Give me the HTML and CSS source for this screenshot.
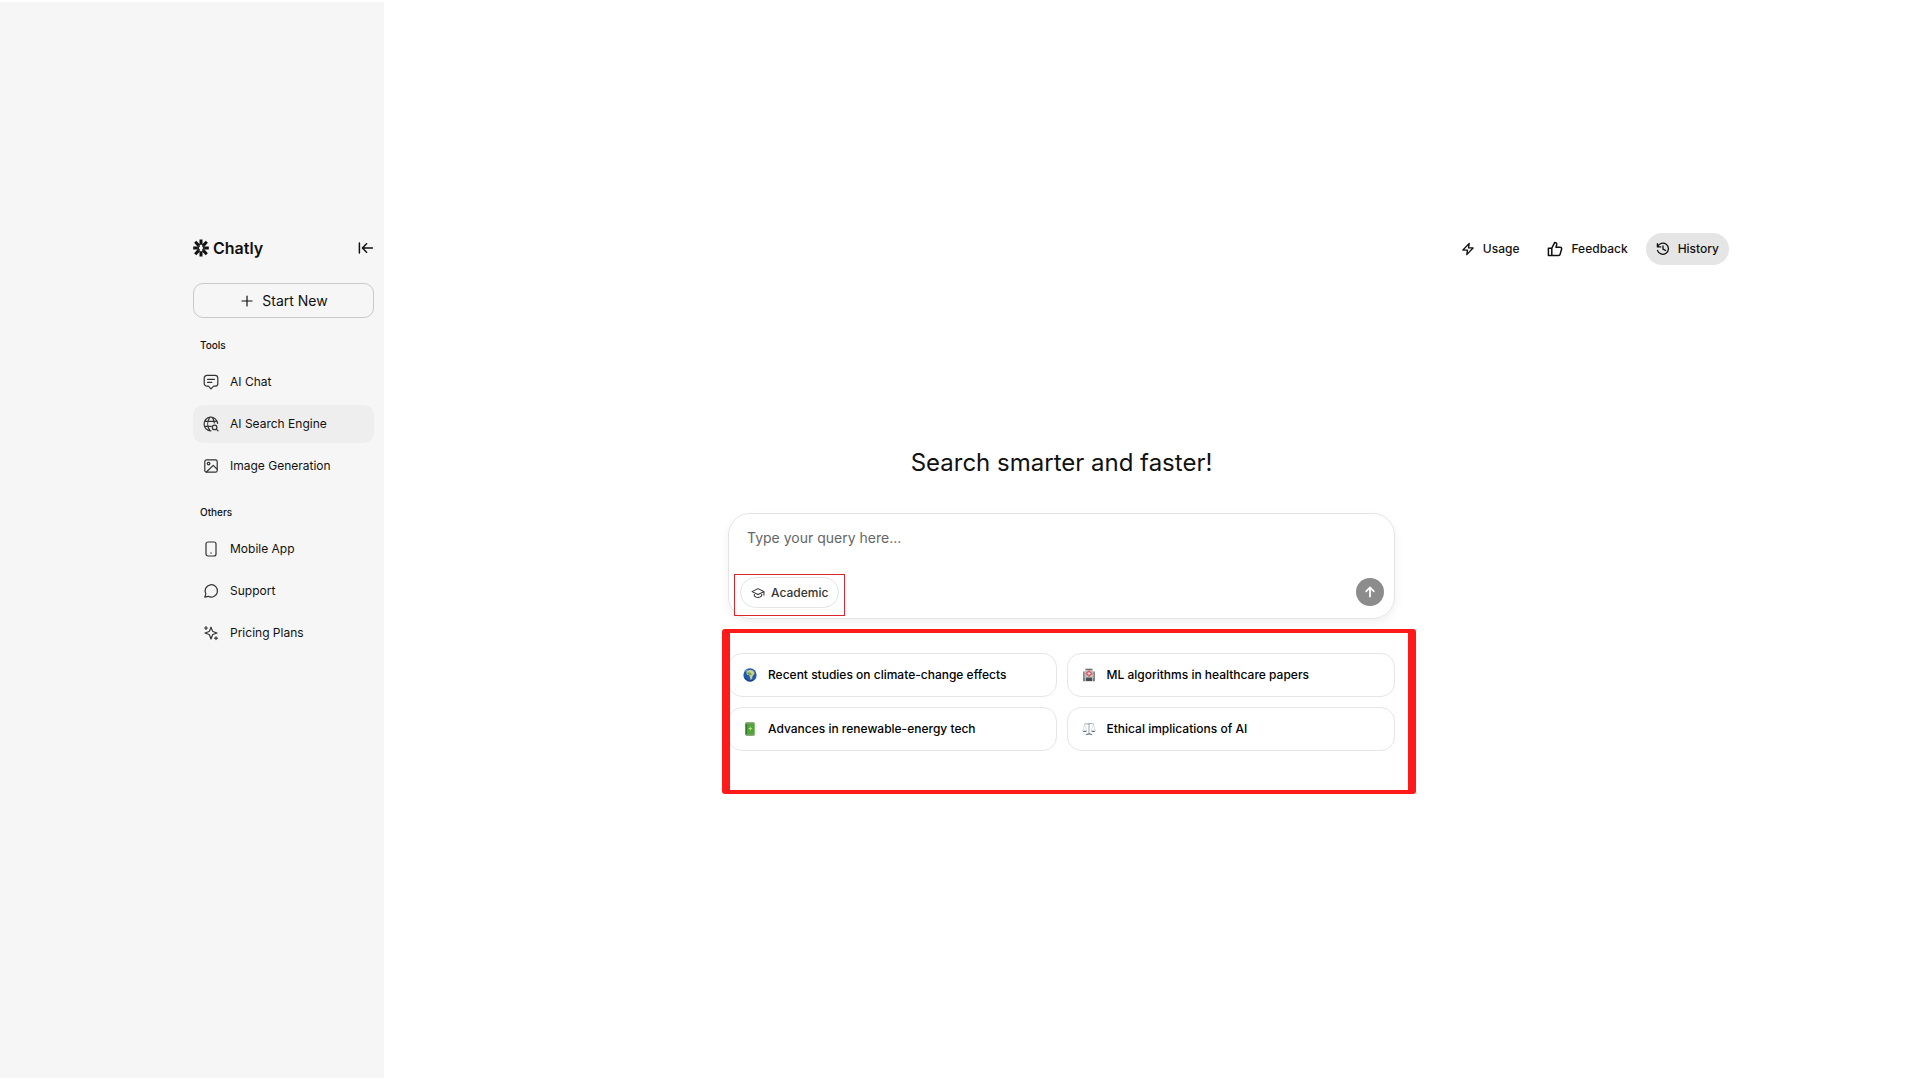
FILE: index.html
```html
<!DOCTYPE html>
<html lang="en">
<head>
    <meta charset="UTF-8">
    <meta name="viewport" content="width=device-width, initial-scale=1.0">
    <title>Chatly</title>
    <link rel="stylesheet" href="styles.css">
</head>
<body>
    <div class="app">
        <aside class="sidebar">
            <div class="brand-row">
                <a class="brand" href="#">
                    <svg class="brand-mark" viewBox="0 0 16 18">
                        <path d="M8 .5v5.2M8 12.3v5.2M.2 9h4.6M11.2 9h4.6M2.2 2.8l3.6 3.8M13.8 2.8l-3.6 3.8M2.2 15.2l3.6-3.8M13.8 15.2l-3.6-3.8"/>
                        <path class="thin" d="M5 9l1.6-2.6M11 9l-1.6-2.6M5 9l1.6 2.6M11 9l-1.6 2.6"/>
                    </svg>
                    Chatly
                </a>
                <button class="collapse" type="button" aria-label="Collapse sidebar">
                    <svg class="icon" viewBox="0 0 16 16"><path d="M1.4 3v10M14.4 8H4.6M8.600 3.800L4.400 8l4.200 4.200"/></svg>
                </button>
            </div>

            <button class="start-new" type="button">
                <svg class="icon" viewBox="0 0 16 16"><path d="M8 3v10M3 8h10"/></svg>
                Start New
            </button>

            <nav class="nav">
                <h2>Tools</h2>
                <a class="nav-item" href="#">
                    <svg class="icon" viewBox="0 0 16 16"><path d="M4 1.400h8a2.800 2.800 0 0 1 2.800 2.800v5.200A2.800 2.800 0 0 1 12 12.200h-1.400L8 14.800l-2.600-2.600H4a2.800 2.800 0 0 1-2.800-2.800V4.200A2.800 2.800 0 0 1 4 1.400zM4.600 5.400h6.800M4.600 8.400h4.200"/></svg>
                    AI Chat
                </a>
                <a class="nav-item active" href="#">
                    <svg class="icon" viewBox="0 0 16 16"><path d="M14.600 7.400A6.800 6.800 0 1 0 8 14.800M1.600 5.400h12.600M1.600 10.400h6.600M7 1.200c-3 4-3 9.400 0 13.400M9 1.200c1.400 1.700 2.100 3.700 2.300 5.800"/><circle cx="11.600" cy="11.400" r="2.300"/><path d="M13.300 13.100l1.700 1.700"/></svg>
                    AI Search Engine
                </a>
                <a class="nav-item" href="#">
                    <svg class="icon" viewBox="0 0 16 16"><rect x="1.800" y="1.800" width="12.400" height="12.400" rx="1.800"/><circle cx="5.600" cy="5.600" r="1.300"/><path d="M3.400 14l6.800-6.600 4 3.800"/></svg>
                    Image Generation
                </a>
            </nav>

            <nav class="nav">
                <h2>Others</h2>
                <a class="nav-item" href="#">
                    <svg class="icon" viewBox="0 0 16 16"><rect x="3" y="1" width="10" height="14" rx="2"/><path d="M8 11.800v.4"/></svg>
                    Mobile App
                </a>
                <a class="nav-item" href="#">
                    <svg class="icon" viewBox="0 0 16 16"><path d="M2.800 10.800A6.200 6.200 0 1 1 5.200 13.300L1.800 14.200z"/></svg>
                    Support
                </a>
                <a class="nav-item" href="#">
                    <svg class="icon" viewBox="0 0 16 16"><path d="M8 2.200l1.300 3.400a2 2 0 0 0 1.200 1.200L14 8l-3.500 1.300a2 2 0 0 0-1.200 1.200L8 14l-1.300-3.500a2 2 0 0 0-1.200-1.200L2 8l3.500-1.200a2 2 0 0 0 1.200-1.200zM3 1.600v2.800M1.600 3h2.800M13 11.800v2.800M11.600 13.200h2.800"/></svg>
                    Pricing Plans
                </a>
            </nav>
        </aside>

        <main class="main">
            <header class="topbar">
                <button class="top-btn" type="button">
                    <svg class="icon" viewBox="0 0 16 16"><path d="M9.400 1.600L2.200 9.200h5.200l-.8 5.200 7.200-7.600H8.600z"/></svg>
                    Usage
                </button>
                <button class="top-btn" type="button">
                    <svg class="icon large" viewBox="0 0 16 16"><path d="M4.800 7.200v7.200M1.400 7.200h3.400l3-5.800a1.900 1.900 0 0 1 1.900 2.300l-.7 2.500h4.200a1.500 1.500 0 0 1 1.400 1.900l-1.500 5.200a1.500 1.500 0 0 1-1.400 1.100H1.400z"/></svg>
                    Feedback
                </button>
                <button class="top-btn active" type="button">
                    <svg class="icon" viewBox="0 0 16 16"><path d="M1.800 5.400A6.400 6.400 0 1 1 1.700 9.600M1.600 1.800v3.800h3.800M8 4.600V8.200l2.800 1.400"/></svg>
                    History
                </button>
            </header>

            <section class="search">
                <h1>Search smarter and faster!</h1>

                <form class="composer">
                    <textarea rows="1" aria-label="Query" placeholder="Type your query here..."></textarea>
                    <div class="composer-row">
                        <div class="mode">
                            <button class="chip" type="button">
                                <svg class="icon" viewBox="0 0 16 16"><path d="M8 3L1.200 6.400 8 9.800l6.800-3.400zM3.800 7.800v3.400c2.400 2.400 6 2.400 8.400 0V7.800M14.800 6.400v4"/></svg>
                                Academic
                            </button>
                        </div>
                        <button class="send" type="button" aria-label="Send">
                            <svg class="icon" viewBox="0 0 16 16"><path d="M8 13.200V3M3.600 7.200L8 2.800l4.400 4.400"/></svg>
                        </button>
                    </div>
                </form>

                <div class="suggestions">
                    <button class="card" type="button">
                        <svg class="emoji" viewBox="0 0 16 16">
                            <circle cx="8" cy="8" r="7.600" fill="#2458b0"/>
                            <path d="M2 4.500A7 7 0 0 1 6 1.300L4.500 4z" fill="#6fa3dc"/>
                            <path d="M5 3.200l3-1.200 3.500.8 1.800 3-1 2-1.300 1.200-.6 3-1.600 1.600-1-3.200-.6-2-2.600-.6-.8-2.400z" fill="#c8d089"/>
                            <path d="M5.200 4.800l3 .4 1.800 1.600-1 1.600-2.800-.8-1.400-1z" fill="#73a653"/>
                            <path d="M2 10.500a6.800 6.800 0 0 0 10 3.200" fill="none" stroke="#17376f"/>
                        </svg>
                        Recent studies on climate-change effects
                    </button>
                    <button class="card" type="button">
                        <svg class="emoji" viewBox="0 0 16 16">
                            <path d="M1.200 4h3v11h-3zM11.800 4h3v11h-3z" fill="#747d83"/>
                            <path d="M3.600 2.200h8.800V15H3.600z" fill="#c4c0be"/>
                            <path d="M4 .8h8v1.400H4z" fill="#6b6260"/>
                            <path d="M8 2.200l4 4-4 4-4-4z" fill="#e34d58"/>
                            <path d="M7.500 4.200h1v1.500H10v1H8.500v1.500h-1V6.700H6v-1h1.500z" fill="#fff"/>
                            <path d="M4.600 11h6.800v4H4.600z" fill="#454c52"/>
                            <path d="M2 5.600h1.200M2 8h1.200M2 10.400h1.200M12.800 5.600H14M12.800 8H14M12.800 10.400H14" stroke="#d5dde0"/>
                        </svg>
                        ML algorithms in healthcare papers
                    </button>
                    <button class="card" type="button">
                        <svg class="emoji" viewBox="0 0 16 16">
                            <rect x="2.600" y=".4" width="10.800" height="15.200" rx="1.500" fill="#4fa53c"/>
                            <path d="M3 2h1.600v12H3z" fill="#2d7727"/>
                            <path d="M3 1h10v1.400H3zM3 13.600h10V15H3z" fill="#829473"/>
                            <path d="M8.400 5.400v4.200M6.400 7.500h4" stroke="#d1e783"/>
                        </svg>
                        Advances in renewable-energy tech
                    </button>
                    <button class="card" type="button">
                        <svg class="emoji" viewBox="0 0 16 16">
                            <path d="M8 1v12M2.500 2.600C5 1.200 6 2.800 8 2.200s3-.8 5.500.4" fill="none" stroke="#8b9aa8"/>
                            <path d="M3 3L.8 10M3 3l2.400 7M13 3l-2.400 7M13 3l2.200 7" fill="none" stroke="#bdc6ce" stroke-width=".6"/>
                            <path d="M.4 10h5.400c-.8 2-4.600 2-5.400 0zM10.200 10h5.400c-.8 2-4.600 2-5.400 0z" fill="#5f7180"/>
                            <path d="M4 15c.6-1.600 2-1.400 4-2.400 2 1 3.400.8 4 2.400l-4-.8z" fill="#667785"/>
                        </svg>
                        Ethical implications of AI
                    </button>
                </div>
            </section>
        </main>
    </div>
</body>
</html>
```

FILE: styles.css
```css
* {
    margin: 0;
    padding: 0;
    box-sizing: border-box;
}

body {
    background: #fff;
    color: #111;
    font-family: Inter, "Liberation Sans", sans-serif;
    font-size: 12px;
    line-height: 20px;
}

button,
textarea {
    border: none;
    background: none;
    color: inherit;
    font: inherit;
}

button {
    cursor: pointer;
}

a {
    color: inherit;
    text-decoration: none;
}

.app {
    display: grid;
    grid-template-columns: 384px 1fr;
    min-height: 100vh;
    padding: 2px 0;
}

.icon {
    width: 16px;
    height: 16px;
    flex: none;
    fill: none;
    stroke: currentColor;
    stroke-width: 1.2;
    stroke-linecap: round;
    stroke-linejoin: round;
}

/* Sidebar */
.sidebar {
    background: #f6f6f6;
    padding: 234px 10px 0 193px;
}

.brand-row {
    display: flex;
    align-items: center;
    justify-content: space-between;
    height: 24px;
    margin-bottom: 23px;
}

.brand {
    display: flex;
    align-items: center;
    gap: 4px;
    font-size: 16px;
    font-weight: 600;
}

.brand-mark {
    width: 16px;
    height: 18px;
    fill: none;
    stroke: #111;
    stroke-width: 3;
}

.brand-mark .thin {
    stroke-width: 1.4;
}

.collapse {
    display: flex;
}

.collapse .icon {
    stroke-width: 1.5;
}

.start-new {
    display: flex;
    align-items: center;
    justify-content: center;
    gap: 7px;
    width: 100%;
    height: 35px;
    border: 1px solid #c9c9c9;
    border-radius: 10px;
    font-size: 14px;
}

.nav {
    display: flex;
    flex-direction: column;
    gap: 4px;
    padding-top: 17px;
}

.nav h2 {
    padding: 0 7px;
    margin-bottom: 4px;
    font-size: 10px;
    font-weight: 500;
    line-height: 20px;
}

.nav-item {
    display: flex;
    align-items: center;
    gap: 11px;
    height: 38px;
    padding: 0 10px;
    border-radius: 10px;
}

.nav-item .icon {
    color: #333;
}

.nav-item.active {
    background: #eee;
}

/* Main area */
.main {
    padding: 231px 188px 0 0;
}

.topbar {
    display: flex;
    justify-content: flex-end;
    gap: 8px;
    padding-right: 10px;
    margin-bottom: 180px;
}

.top-btn {
    display: flex;
    align-items: center;
    gap: 8px;
    height: 32px;
    padding: 0 10px;
    border-radius: 16px;
    font-weight: 500;
}

.top-btn .icon {
    width: 14px;
    height: 14px;
    stroke-width: 1.5;
}

.top-btn .icon.large {
    width: 16px;
    height: 16px;
}

.top-btn.active {
    background: #e5e5e5;
}

.search {
    max-width: 667px;
    margin: 0 auto;
}

.search h1 {
    margin-bottom: 32px;
    font-size: 24px;
    font-weight: 400;
    line-height: 36px;
    text-align: center;
}

.composer {
    border: 1px solid #e4e4e4;
    border-radius: 22px;
    box-shadow: 0 4px 10px rgba(0, 0, 0, 0.06);
    padding-bottom: 2px;
}

.composer textarea {
    display: block;
    width: 100%;
    height: 60px;
    padding: 14px 18px 0;
    outline: none;
    resize: none;
    font-size: 14px;
}

.composer textarea::placeholder {
    color: #666;
}

.composer-row {
    display: flex;
    align-items: flex-start;
    justify-content: space-between;
    padding: 0 10px 0 5px;
}

.mode {
    border: 1px solid #d8262c;
    padding: 2px 5px 7px;
}

.chip {
    display: flex;
    align-items: center;
    gap: 6px;
    height: 31px;
    padding: 0 10px;
    border: 1px solid #e4e4e4;
    border-radius: 16px;
    color: #333;
    font-weight: 500;
}

.chip .icon {
    width: 14px;
    height: 14px;
}

.send {
    display: flex;
    align-items: center;
    justify-content: center;
    width: 28px;
    height: 28px;
    margin-top: 4px;
    border-radius: 50%;
    background: #8c8c8c;
    color: #fff;
}

.send .icon {
    width: 14px;
    height: 14px;
    stroke-width: 2;
}

.suggestions {
    position: relative;
    display: grid;
    grid-template-columns: 1fr 1fr;
    gap: 10px;
    margin-top: 10px;
    padding: 24px 0 43px;
}

/* highlight frame drawn over the edges of the cards */
.suggestions::after {
    content: '';
    position: absolute;
    inset: 0 -21px 0 -6px;
    border: solid #ff1a1a;
    border-width: 4px 8px;
    border-radius: 3px;
    pointer-events: none;
}

.card {
    display: flex;
    align-items: center;
    gap: 11px;
    height: 44px;
    padding: 0 14px;
    border: 1px solid #e6e6e6;
    border-radius: 14px;
    color: #000;
    font-weight: 500;
    text-align: left;
}

.emoji {
    width: 14px;
    height: 14px;
    flex: none;
}
```
